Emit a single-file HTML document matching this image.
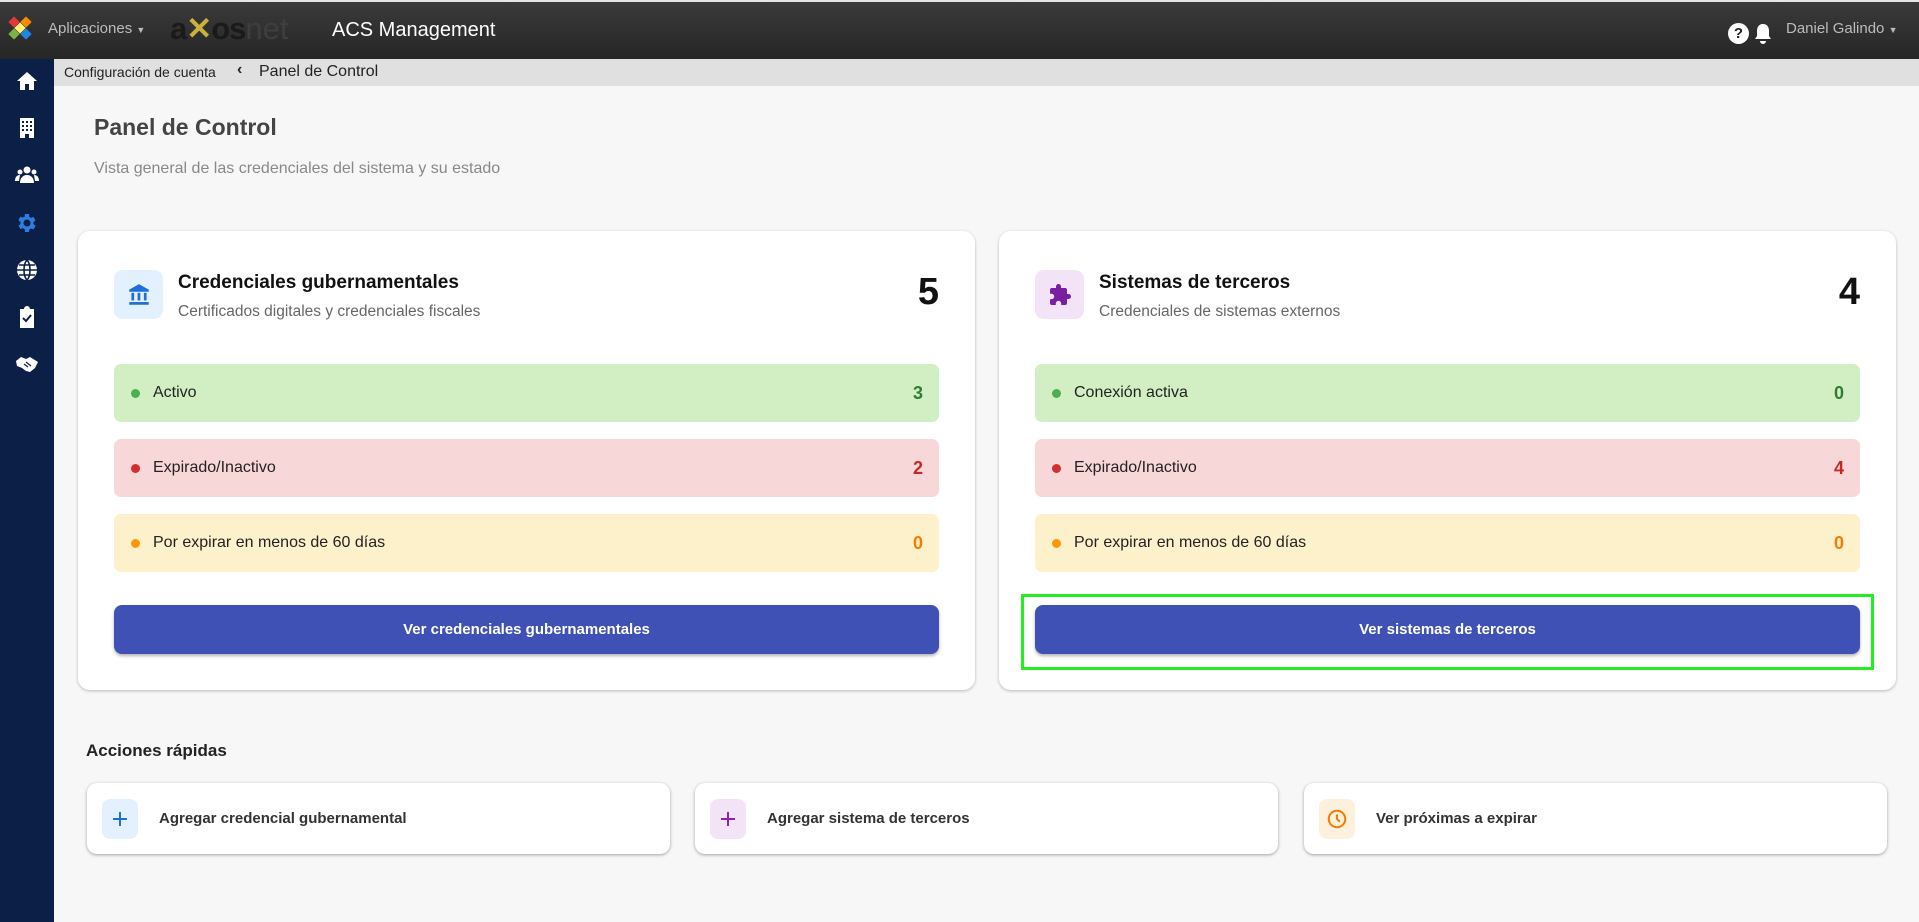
<!DOCTYPE html>
<html><head><meta charset="utf-8"><style>
*{box-sizing:border-box;margin:0;padding:0}
body{width:1919px;height:922px;overflow:hidden;background:#f7f7f7;font-family:"Liberation Sans",Arial,sans-serif;position:relative}
.top{position:absolute;left:0;top:0;width:1919px;height:59px;background:linear-gradient(#3a3a3a,#262626);border-top:2px solid #e5e5e5}
.side{position:absolute;left:0;top:59px;width:54px;height:863px;background:#0c1f47}
.side svg{position:absolute;left:15px;width:24px;height:24px}
.bc{position:absolute;left:54px;top:59px;width:1865px;height:27px;background:#e0e0e0;font-size:14px;color:#222}
.card{position:absolute;background:#fff;border-radius:12px;box-shadow:0 1px 3px rgba(0,0,0,.25)}
.ic{position:absolute;width:49px;height:49px;border-radius:9px;display:flex;align-items:center;justify-content:center}
.ct{position:absolute;font-weight:bold;font-size:19px;color:#111}
.cs{position:absolute;font-size:15.5px;color:#666}
.num{position:absolute;font-weight:bold;font-size:38px;color:#111;text-align:right}
.row{position:absolute;left:36px;width:825px;height:58px;border-radius:7px;font-size:16px;color:#222}
.row .d{position:absolute;left:17px;top:25px;width:9px;height:9px;border-radius:50%}
.row .t{position:absolute;left:39px;top:20px}
.row .n{position:absolute;right:16px;top:19px;font-weight:bold;font-size:18px}
.btn{position:absolute;left:36px;top:374px;width:825px;height:49px;border-radius:8px;background:#3f51b5;color:#fff;font-weight:bold;font-size:15px;text-align:center;line-height:49px;box-shadow:0 2px 3px rgba(0,0,0,.3)}
.qa{position:absolute;top:783px;height:71px;background:#fff;border-radius:10px;box-shadow:0 1px 3px rgba(0,0,0,.35);font-size:15px;color:#333;font-weight:bold}
.qa .i{position:absolute;left:15px;top:16px;width:36px;height:40px;border-radius:8px;display:flex;align-items:center;justify-content:center}
.qa .t{position:absolute;left:72px;top:27px}
</style></head><body>
<div class="top">
 <svg style="position:absolute;left:8px;top:14px" width="24" height="24" viewBox="0 0 24 24"><rect x="2" y="2" width="8" height="8" fill="#e53935" transform="rotate(45 6 6)"/><rect x="14" y="2" width="8" height="8" fill="#fb8c00" transform="rotate(45 18 6)"/><rect x="8" y="8" width="8" height="8" fill="#fff176" transform="rotate(45 12 12)"/><rect x="2" y="14" width="8" height="8" fill="#7cb342" transform="rotate(45 6 18)"/><rect x="14" y="14" width="8" height="8" fill="#1e88e5" transform="rotate(45 18 18)"/></svg>
 <div style="position:absolute;left:48px;top:18px;color:#bbb;font-size:15px">Aplicaciones <span style="font-size:9px">▼</span></div>
 <div style="position:absolute;left:170px;top:9px;color:#1a1a1a;font-size:31px;font-weight:bold;letter-spacing:-1px">a<span style="color:#c9b13b">✕</span>os<span style="font-weight:normal;color:#3e3e3e;letter-spacing:0">net</span></div>
 <div style="position:absolute;left:332px;top:17px;color:#fff;font-size:20px">ACS Management</div>
 <div style="position:absolute;left:1728px;top:21px;width:21px;height:21px;border-radius:50%;background:#fff;color:#222;font-weight:bold;font-size:15px;text-align:center;line-height:21px">?</div>
 <svg style="position:absolute;left:1753px;top:20px" width="20" height="24" viewBox="0 0 20 24"><path d="M10 2c-4 0-6 3-6 7v5l-2 3h16l-2-3V9c0-4-2-7-6-7zM7 19a3 3 0 006 0z" fill="#fff"/></svg>
 <div style="position:absolute;left:1786px;top:18px;color:#bbb;font-size:15px">Daniel Galindo <span style="font-size:9px">▼</span></div>
</div>
<div class="side">
 <svg style="top:10px" viewBox="0 0 24 24"><path d="M12 3L2 12h3v9h5v-6h4v6h5v-9h3z" fill="#fff"/></svg>
 <svg style="top:57px" viewBox="0 0 24 24"><path d="M5 2h14v20h-5v-4h-4v4H5z" fill="#fff"/><g fill="#0c1f47"><rect x="7" y="5" width="2" height="2"/><rect x="11" y="5" width="2" height="2"/><rect x="15" y="5" width="2" height="2"/><rect x="7" y="9" width="2" height="2"/><rect x="11" y="9" width="2" height="2"/><rect x="15" y="9" width="2" height="2"/><rect x="7" y="13" width="2" height="2"/><rect x="11" y="13" width="2" height="2"/><rect x="15" y="13" width="2" height="2"/></g></svg>
 <svg style="top:104px" viewBox="0 0 24 24" fill="#fff"><circle cx="12" cy="7" r="3.5"/><circle cx="5" cy="9" r="2.5"/><circle cx="19" cy="9" r="2.5"/><path d="M5 20c0-5 3-8 7-8s7 3 7 8zM0 18c0-4 2-6 5-6l-1 6zM24 18c0-4-2-6-5-6l1 6z"/></svg>
 <svg style="top:152px" viewBox="0 0 24 24"><path d="M19.4 13a7.5 7.5 0 000-2l2.1-1.6-2-3.5-2.5 1a7 7 0 00-1.7-1L15 3h-4l-.4 2.6a7 7 0 00-1.7 1l-2.5-1-2 3.5L6.6 11a7.5 7.5 0 000 2l-2.1 1.6 2 3.5 2.5-1a7 7 0 001.7 1L11 21h4l.4-2.6a7 7 0 001.7-1l2.5 1 2-3.5zM13 15.5a3.5 3.5 0 110-7 3.5 3.5 0 010 7z" fill="#2f7de1" transform="translate(-1 0)"/></svg>
 <svg style="top:199px" viewBox="0 0 24 24"><circle cx="12" cy="12" r="10" fill="#fff"/><path d="M2 12h20M12 2c-4 4-4 16 0 20M12 2c4 4 4 16 0 20M4 7h16M4 17h16" stroke="#0c1f47" stroke-width="1.6" fill="none"/></svg>
 <svg style="top:246px" viewBox="0 0 24 24"><path d="M5 4h4a3 3 0 016 0h4v19H5z" fill="#fff"/><path d="M8 13l3 3 5-6" stroke="#0c1f47" stroke-width="2" fill="none"/></svg>
 <svg style="top:293px" viewBox="0 0 24 24"><path d="M1 9l5-4 5 2 4-2 8 5-3 6-5 4-4-1-4-3-5-2z" fill="#fff"/><path d="M9 12l4 3M11 10l5 4" stroke="#0c1f47" stroke-width="1.2"/></svg>
</div>
<div class="bc"><span style="position:absolute;left:10px;top:5px">Configuración de cuenta</span><span style="position:absolute;left:183px;top:2px;font-weight:bold;font-size:16px">‹</span><span style="position:absolute;left:205px;top:4px;font-size:16px">Panel de Control</span></div>
<div style="position:absolute;left:94px;top:114px;font-size:23px;font-weight:bold;color:#444">Panel de Control</div>
<div style="position:absolute;left:94px;top:160px;font-size:16px;color:#888">Vista general de las credenciales del sistema y su estado</div>

<div class="card" style="left:78px;top:231px;width:897px;height:459px">
 <div class="ic" style="left:36px;top:39px;background:#e3f0fd"><svg width="26" height="26" viewBox="0 0 24 24" fill="#1e6fd9"><path d="M12 2L3 7v2h18V7z"/><rect x="5" y="10" width="2.5" height="7"/><rect x="10.7" y="10" width="2.5" height="7"/><rect x="16.5" y="10" width="2.5" height="7"/><rect x="3" y="18.5" width="18" height="2.5"/></svg></div>
 <div class="ct" style="left:100px;top:41px">Credenciales gubernamentales</div>
 <div class="cs" style="left:100px;top:72px">Certificados digitales y credenciales fiscales</div>
 <div class="num" style="right:36px;top:40px">5</div>
 <div class="row" style="top:133px;background:#d2efc4"><span class="d" style="background:#4caf50"></span><span class="t">Activo</span><span class="n" style="color:#2e7d32">3</span></div>
 <div class="row" style="top:208px;background:#f8d7d9"><span class="d" style="background:#d32f2f"></span><span class="t">Expirado/Inactivo</span><span class="n" style="color:#c62828">2</span></div>
 <div class="row" style="top:283px;background:#fdf1cb"><span class="d" style="background:#ff9800"></span><span class="t">Por expirar en menos de 60 días</span><span class="n" style="color:#f57c00">0</span></div>
 <div class="btn">Ver credenciales gubernamentales</div>
</div>

<div class="card" style="left:999px;top:231px;width:897px;height:459px">
 <div class="ic" style="left:36px;top:39px;background:#f3e3f6"><svg width="24" height="24" viewBox="0 0 24 24" fill="#7b1fa2"><path d="M20.5 11H19V7a2 2 0 00-2-2h-4V3.5a2.5 2.5 0 00-5 0V5H4a2 2 0 00-2 2v3.8h1.5a2.7 2.7 0 010 5.4H2V20a2 2 0 002 2h3.8v-1.5a2.7 2.7 0 015.4 0V22H17a2 2 0 002-2v-4h1.5a2.5 2.5 0 000-5z"/></svg></div>
 <div class="ct" style="left:100px;top:41px">Sistemas de terceros</div>
 <div class="cs" style="left:100px;top:72px">Credenciales de sistemas externos</div>
 <div class="num" style="right:36px;top:40px">4</div>
 <div class="row" style="top:133px;background:#d2efc4"><span class="d" style="background:#4caf50"></span><span class="t">Conexión activa</span><span class="n" style="color:#2e7d32">0</span></div>
 <div class="row" style="top:208px;background:#f8d7d9"><span class="d" style="background:#d32f2f"></span><span class="t">Expirado/Inactivo</span><span class="n" style="color:#c62828">4</span></div>
 <div class="row" style="top:283px;background:#fdf1cb"><span class="d" style="background:#ff9800"></span><span class="t">Por expirar en menos de 60 días</span><span class="n" style="color:#f57c00">0</span></div>
 <div class="btn">Ver sistemas de terceros</div>
</div>
<div style="position:absolute;left:1021px;top:594px;width:853px;height:76px;border:3px solid #22ee22"></div>

<div style="position:absolute;left:86px;top:741px;font-size:17px;font-weight:bold;color:#222">Acciones rápidas</div>
<div class="qa" style="left:87px;width:583px"><div class="i" style="background:#e3f0fd"><svg width="18" height="18" viewBox="0 0 18 18"><path d="M9 2v14M2 9h14" stroke="#1e6fd9" stroke-width="2"/></svg></div><span class="t">Agregar credencial gubernamental</span></div>
<div class="qa" style="left:695px;width:583px"><div class="i" style="background:#f3e3f6"><svg width="18" height="18" viewBox="0 0 18 18"><path d="M9 2v14M2 9h14" stroke="#8e24aa" stroke-width="2"/></svg></div><span class="t">Agregar sistema de terceros</span></div>
<div class="qa" style="left:1304px;width:583px"><div class="i" style="background:#fdf0dc"><svg width="22" height="22" viewBox="0 0 24 24" fill="none" stroke="#f57c00" stroke-width="2.2"><circle cx="12" cy="12" r="9"/><path d="M12 7v5l3 3"/></svg></div><span class="t">Ver próximas a expirar</span></div>
</body></html>
